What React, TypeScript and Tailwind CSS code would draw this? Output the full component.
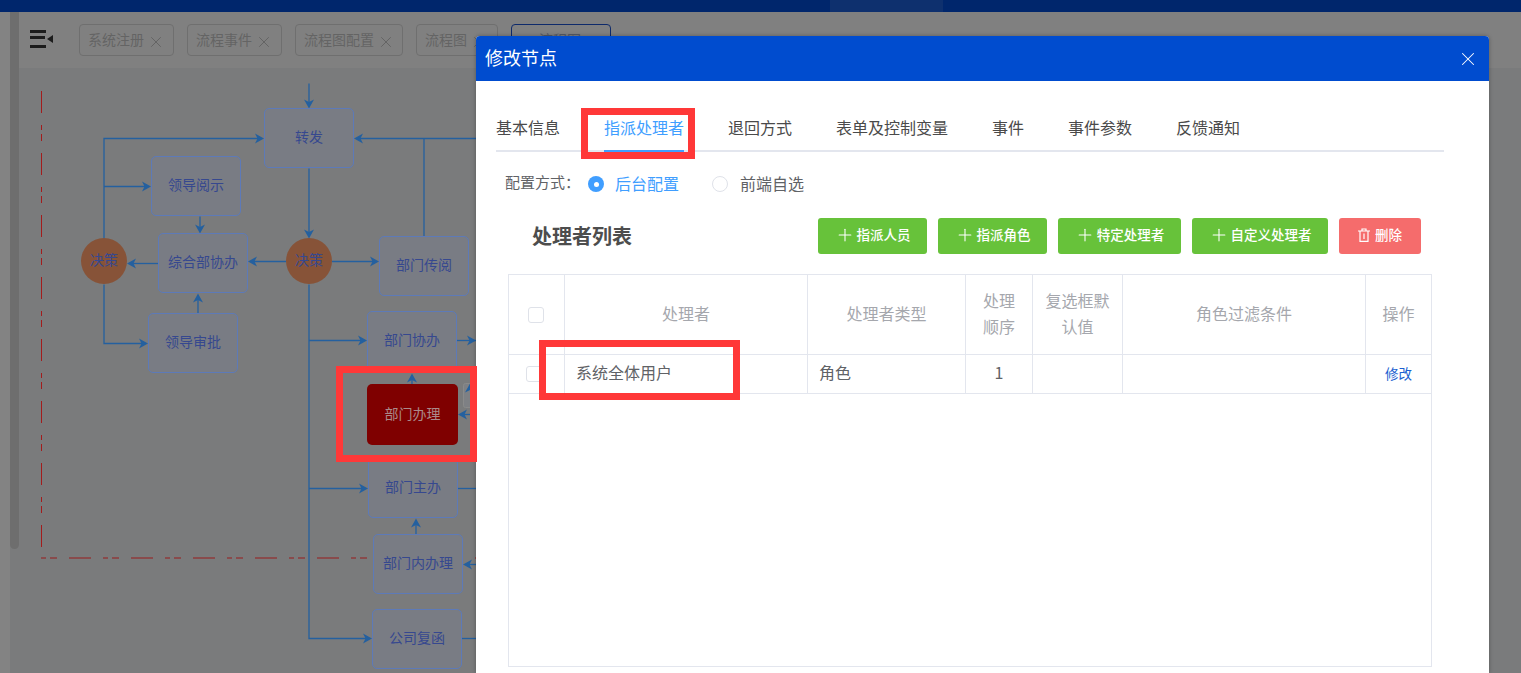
import React from "react";
import { Plus, X } from "lucide-react";

// page coordinates, the svg below uses the same ones through its viewBox
const nodes = [
  { label: "转发", x: 264, y: 108 },
  { label: "领导阅示", x: 151, y: 156 },
  { label: "综合部协办", x: 158, y: 233 },
  { label: "部门传阅", x: 379, y: 236 },
  { label: "领导审批", x: 148, y: 313 },
  { label: "部门协办", x: 367, y: 311 },
  { label: "部门主办", x: 368, y: 458 },
  { label: "部门内办理", x: 373, y: 534 },
  { label: "公司复函", x: 372, y: 609 },
];

const lines = [
  "M309 83V104",
  "M104 238V138H260",
  "M104 186H147",
  "M200 216V229",
  "M158 263H131",
  "M286 261H252",
  "M309 168V234",
  "M332 261H375",
  "M424 236V138",
  "M476 138H358",
  "M198 313V297",
  "M104 284V343H144",
  "M309 284V638H368",
  "M309 340H363",
  "M457 340H476",
  "M412 384V377",
  "M309 488H364",
  "M458 488H476",
  "M416 534V522",
  "M476 564H467",
  "M476 414H462",
  "M462 638H476",
];

const heads: [number, number, number][] = [
  [309, 108, 90],
  [264, 138, 0],
  [151, 186, 0],
  [200, 233, 90],
  [127, 263, 180],
  [248, 261, 180],
  [309, 238, 90],
  [379, 261, 0],
  [354, 138, 180],
  [198, 293, -90],
  [148, 343, 0],
  [372, 638, 0],
  [367, 340, 0],
  [476, 340, 0],
  [412, 373, -90],
  [368, 488, 0],
  [416, 518, -90],
  [463, 564, 180],
  [458, 414, 180],
  [470, 383, -90],
];

const tabs = ["基本信息", "指派处理者", "退回方式", "表单及控制变量", "事件", "事件参数", "反馈通知"];

const actions = [
  { label: "指派人员", w: "w-[109px]" },
  { label: "指派角色", w: "w-[109px]" },
  { label: "特定处理者", w: "w-[123px]" },
  { label: "自定义处理者", w: "w-[136px]" },
];

const PageTab = ({ label, w, active }: { label: string; w: string; active?: boolean }) => (
  <div
    className={`${w} h-8 flex items-center rounded text-sm border ${
      active ? "border-[#0e2a6b] text-[#555a66] pl-[27px]" : "border-[#6f6f6f] text-[#646464] pl-[8px]"
    }`}
  >
    <span className="pb-[3px]">{label}</span>
    {!active && <X className="ml-[3px] mt-[3px] shrink-0 text-[#5e5e5e]" size={18} strokeWidth={1.1} />}
  </div>
);

const Flow = () => (
  <div className="relative flex-1 bg-[#7a7b7c]">
    <svg className="absolute left-0 top-0" width="1502" height="605" viewBox="19 68 1502 605">
      <path
        d="M41.5 91V547"
        stroke="#a31c1c"
        strokeWidth="1"
        fill="none"
        strokeDasharray="22 12 5 4 7 12"
      />
      <path
        d="M41 558H476"
        stroke="#981c1c"
        strokeWidth="1.2"
        fill="none"
        strokeDasharray="22 12 5 4 7 12"
        strokeDashoffset="34"
      />
      <rect x="463.5" y="383.5" width="12" height="24" rx="2" fill="#7e8084" stroke="#8a8a8a" />
      <g transform="translate(0 0.5)">
        {lines.map((d) => (
          <path key={d} d={d} stroke="#24609f" strokeWidth="1.3" fill="none" />
        ))}
        {heads.map(([x, y, r]) => (
          <path
            key={`${x}-${y}`}
            d="M0 0L-9 -5L-6.5 0L-9 5Z"
            fill="#24609f"
            transform={`translate(${x} ${y}) rotate(${r})`}
          />
        ))}
      </g>
    </svg>

    {nodes.map((n) => (
      <div
        key={n.label}
        className="absolute w-[90px] h-[60px] pb-1 flex items-center justify-center rounded-[5px] border border-[#5d7ab8] bg-[#797c84] text-sm text-[#36488f]"
        style={{ left: n.x - 19, top: n.y - 68 }}
      >
        {n.label}
      </div>
    ))}

    <div className="absolute left-[62px] top-[170px] w-[46px] h-[46px] pb-1 rounded-full bg-[#875338] flex items-center justify-center text-sm text-[#36488f]">
      决策
    </div>
    <div className="absolute left-[267px] top-[170px] w-[46px] h-[46px] pb-1 rounded-full bg-[#875338] flex items-center justify-center text-sm text-[#36488f]">
      决策
    </div>
    <div className="absolute left-[348px] top-[316px] w-[91px] h-[61px] pb-1 rounded-[5px] bg-[#7f0000] flex items-center justify-center text-sm text-[#ab8a8a]">
      部门办理
    </div>
  </div>
);

const Checkbox = () => <span className="block w-4 h-4 rounded-[3px] border border-[#dfe2e9] bg-white" />;

const Modal = () => (
  <div className="absolute left-[476px] top-[36px] w-[1013px] h-[637px] bg-white rounded-t overflow-hidden shadow-[0_0_4px_rgba(0,0,0,0.3)]">
    <div className="h-[45px] bg-[#004ccf] flex items-center justify-between pl-[9px] pr-[10px] text-white">
      <span className="text-lg pb-1">修改节点</span>
      <X size={22} strokeWidth={1.1} />
    </div>

    <div className="pl-5 pr-[45px]">
      <div className="mt-[29px] flex gap-[44px] border-b-2 border-[#e3e6ee] h-[42px]">
        {tabs.map((t, i) => (
          <div
            key={t}
            className={`h-[42px] leading-[35px] text-base ${
              i === 1 ? "text-[#409eff] border-b-2 border-[#409eff]" : "text-[#4a4a4a]"
            }`}
          >
            {t}
          </div>
        ))}
      </div>

      <div className="mt-4 h-8 pl-[9px] flex items-center text-[#606266]">
        <span className="w-[83px] text-[15px] pb-[3px]">配置方式：</span>
        <span className="w-4 h-4 rounded-full bg-[#409eff] flex items-center justify-center">
          <span className="w-[5px] h-[5px] rounded-full bg-white" />
        </span>
        <span className="ml-[11px] w-[97px] pb-[3px] text-[#409eff]">后台配置</span>
        <span className="w-4 h-4 rounded-full border border-[#dfe2e9] bg-white" />
        <span className="ml-[12px] pb-[3px]">前端自选</span>
      </div>

      <div className="mt-[18px] h-9 pl-[36px] pr-[23px] flex items-center justify-between">
        <h2 className="text-xl font-bold text-[#4d4d4d]">处理者列表</h2>
        <div className="flex gap-[11px]">
          {actions.map((a) => (
            <button
              key={a.label}
              className={`${a.w} h-9 pb-[3px] rounded-[3px] bg-[#67c23a] text-white text-[13.5px] font-medium flex items-center justify-center gap-[2px]`}
            >
              <Plus size={20} strokeWidth={1.3} />
              {a.label}
            </button>
          ))}
          <button className="w-[82px] h-9 pb-[3px] rounded-[3px] bg-[#f56c6c] text-white text-[13.5px] font-medium flex items-center justify-center gap-[5px]">
            <svg width="12" height="14" viewBox="0 0 12 14" fill="none" stroke="white" strokeWidth="1.2">
              <path d="M0 3H12M4 3V1H8V3M2 3V13.4H10V3M6 5.5V11" />
            </svg>
            删除
          </button>
        </div>
      </div>

      <div className="mt-5 ml-3 w-[924px] h-[393px] border border-[#e3e6ee] grid grid-cols-[56px_243px_158px_67px_90px_243px_65px] grid-rows-[80px_39px] content-start text-base">
        <div className="border-r border-b border-[#e3e6ee] flex items-center pl-[19px]">
          <Checkbox />
        </div>
        {["处理者", "处理者类型", "处理顺序", "复选框默认值", "角色过滤条件", "操作"].map((h, i) => (
          <div
            key={h}
            className={`border-b border-[#e3e6ee] pb-1 flex items-center justify-center text-center leading-[26px] text-[#a5a7ad] ${
              i < 5 ? "border-r" : ""
            } ${i === 2 ? "px-[17px]" : "px-3"}`}
          >
            {h}
          </div>
        ))}

        <div className="border-r border-b border-[#e3e6ee] flex items-center pl-[17px]">
          <Checkbox />
        </div>
        <div className="border-r border-b border-[#e3e6ee] pb-1 flex items-center pl-[11px] text-[#606266]">系统全体用户</div>
        <div className="border-r border-b border-[#e3e6ee] pb-1 flex items-center pl-[11px] text-[#606266]">角色</div>
        <div className="border-r border-b border-[#e3e6ee] pb-1 flex items-center justify-center text-[#606266]">1</div>
        <div className="border-r border-b border-[#e3e6ee]" />
        <div className="border-r border-b border-[#e3e6ee]" />
        <div className="border-b border-[#e3e6ee] pb-[2px] flex items-center justify-center text-[13.5px] text-[#1b5fd0]">修改</div>
      </div>
    </div>
  </div>
);

export default function App() {
  return (
    <div className="relative w-[1521px] h-[673px] overflow-hidden bg-[#7a7b7c] font-['Noto_Sans_CJK_SC','Noto_Sans',sans-serif]">
      <div className="h-3 bg-[#00266c] pl-[830px]">
        <div className="w-[113px] h-3 bg-[#0e306e]" />
      </div>

      <div className="flex h-[661px]">
        <div className="w-[10px] bg-[#838383]" />
        <div className="w-[9px] bg-[#7a7b7c]">
          <div className="h-[537px] rounded-b-md bg-[#6e6e6e]" />
        </div>

        <div className="flex-1 flex flex-col">
          <div className="h-14 shrink-0 bg-[#808080] flex items-center">
            <svg className="ml-[11px] mr-[26px] mt-[-2px]" width="23" height="18" viewBox="0 0 23 18">
              <path d="M0 0H16V3H0ZM0 6H15V9H0ZM0 15H16V18H0Z" fill="#1c1c1c" />
              <path d="M23 5V13L17 9Z" fill="#1c1c1c" />
            </svg>
            <div className="flex gap-[13px]">
              <PageTab label="系统注册" w="w-[95px]" />
              <PageTab label="流程事件" w="w-[95px]" />
              <PageTab label="流程图配置" w="w-[108px]" />
              <PageTab label="流程图" w="w-[82px]" />
              <PageTab label="流程图" w="w-[100px]" active />
            </div>
          </div>
          <Flow />
        </div>
      </div>

      <Modal />

      {/* annotation boxes drawn on top of the screenshot */}
      <div className="absolute left-[581px] top-[108px] w-[114px] h-[51px] border-[7px] border-[#ff3838]" />
      <div className="absolute left-[539px] top-[340px] w-[201px] h-[60px] border-[7px] border-[#ff3838]" />
      <div className="absolute left-[336px] top-[366px] w-[141px] h-[96px] border-[7px] border-[#ff3838]" />
    </div>
  );
}
